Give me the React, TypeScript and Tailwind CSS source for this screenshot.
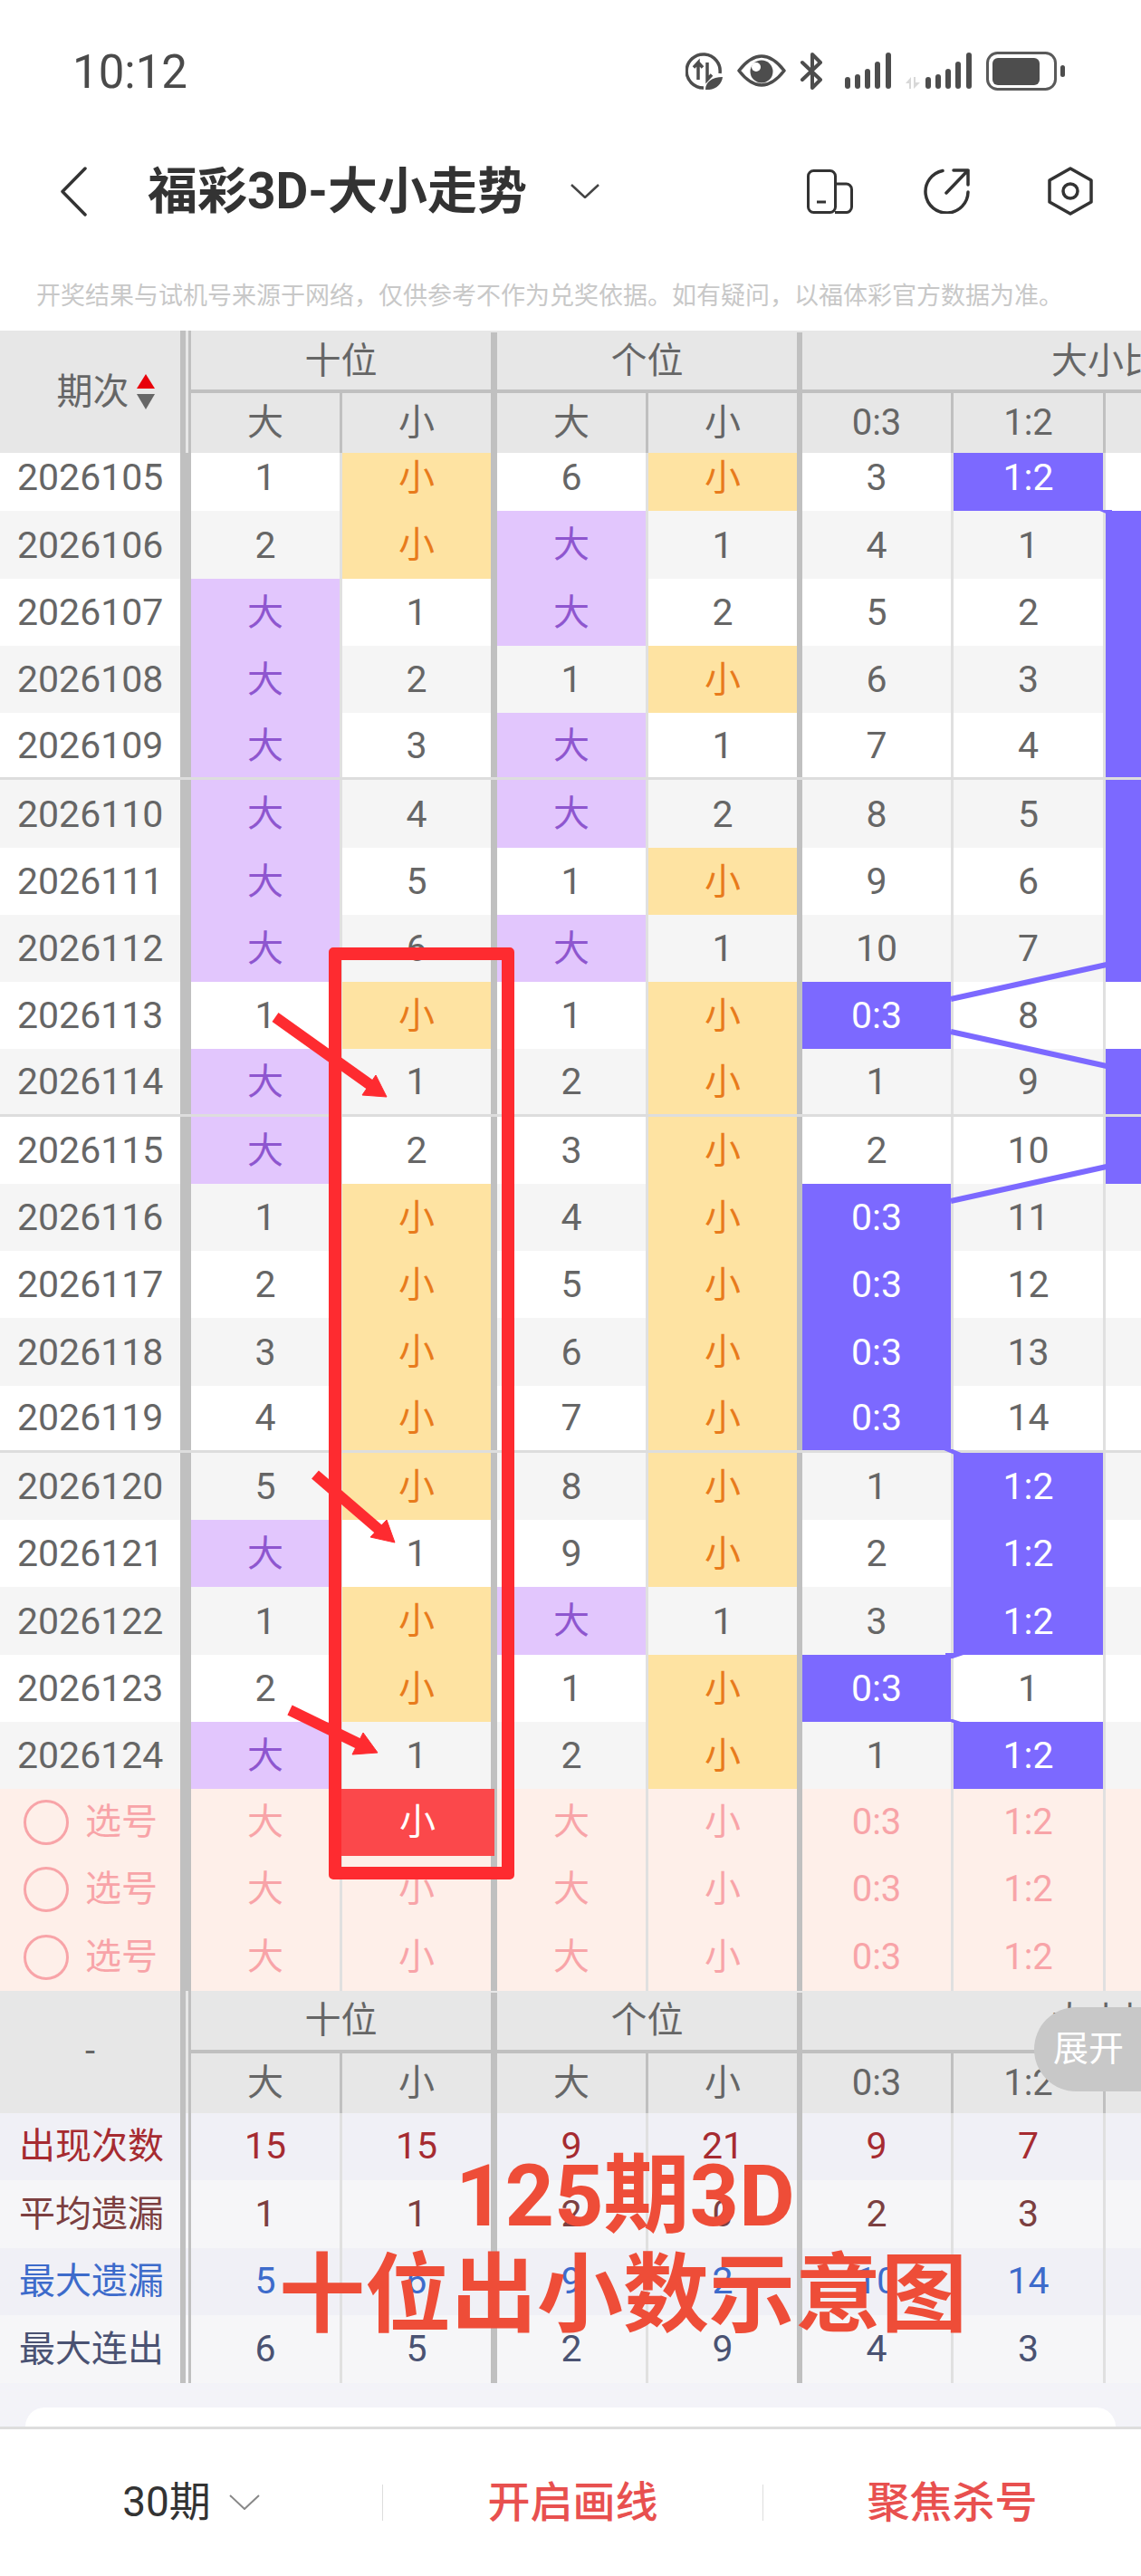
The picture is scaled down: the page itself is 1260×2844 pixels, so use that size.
import React from "react";

const COLS = [
  "w-[167px] border-r-[3px]",
  "w-[171px] border-r-[7px]",
  "w-[167px] border-r-[3px]",
  "w-[170px] border-r-[6px]",
  "w-[167px] border-r-[3px]",
  "w-[168px] border-r-[3px]",
  "w-[167px] border-r-[3px]",
];
// borders between columns: thin ones are lighter in the body, thick ones are always #c0c0c0
const BODY_BORDER = [
  "border-[#e0e0e0]",
  "border-[#c0c0c0]",
  "border-[#e0e0e0]",
  "border-[#c0c0c0]",
  "border-[#e0e0e0]",
  "border-[#e0e0e0]",
  "border-[#e0e0e0]",
];

// period, 十位大, 十位小, 个位大, 个位小, 0:3, 1:2, is 2:1 column filled
const ROWS: [string, string, string, string, string, string, string, boolean][] = [
  ["2026105", "1", "小", "6", "小", "3", "1:2", false],
  ["2026106", "2", "小", "大", "1", "4", "1", true],
  ["2026107", "大", "1", "大", "2", "5", "2", true],
  ["2026108", "大", "2", "1", "小", "6", "3", true],
  ["2026109", "大", "3", "大", "1", "7", "4", true],
  ["2026110", "大", "4", "大", "2", "8", "5", true],
  ["2026111", "大", "5", "1", "小", "9", "6", true],
  ["2026112", "大", "6", "大", "1", "10", "7", true],
  ["2026113", "1", "小", "1", "小", "0:3", "8", false],
  ["2026114", "大", "1", "2", "小", "1", "9", true],
  ["2026115", "大", "2", "3", "小", "2", "10", true],
  ["2026116", "1", "小", "4", "小", "0:3", "11", false],
  ["2026117", "2", "小", "5", "小", "0:3", "12", false],
  ["2026118", "3", "小", "6", "小", "0:3", "13", false],
  ["2026119", "4", "小", "7", "小", "0:3", "14", false],
  ["2026120", "5", "小", "8", "小", "1", "1:2", false],
  ["2026121", "大", "1", "9", "小", "2", "1:2", false],
  ["2026122", "1", "小", "大", "1", "3", "1:2", false],
  ["2026123", "2", "小", "1", "小", "0:3", "1", false],
  ["2026124", "大", "1", "2", "小", "1", "1:2", false],
];

const STATS = [
  { label: "出现次数", values: ["15", "15", "9", "21", "9", "7"], text: "text-[#a62b31]", bg: "bg-[#f0f0f6]" },
  { label: "平均遗漏", values: ["1", "1", "2", "0", "2", "3"], text: "text-[#7c3f40]", bg: "bg-[#f6f6f8]" },
  { label: "最大遗漏", values: ["5", "6", "9", "2", "10", "14"], text: "text-[#3d6bcb]", bg: "bg-[#f0f0f6]" },
  { label: "最大连出", values: ["6", "5", "2", "9", "4", "3"], text: "text-[#4a5272]", bg: "bg-[#f6f6f8]" },
];

function cellTone(value: string, col: number) {
  if (value === "大") return "bg-[#e2c6fd] text-[#8e56cf]";
  if (value === "小") return "bg-[#fee3a2] text-[#e87b1c]";
  if (col >= 4 && value.includes(":")) return "bg-[#7c69ff] text-white";
  return "text-[#666666]";
}

function LeftDivider() {
  return <div className="w-[12px] shrink-0 border-l-[6px] border-r-[3px] border-[#c0c0c0]" />;
}

function TableHeader({ left }: { left: React.ReactNode }) {
  return (
    <div className="relative z-10 flex h-[135px] bg-[#e7e7e7] text-[40px] text-[#666666]">
      <div className="flex w-[199px] shrink-0 items-center justify-center">{left}</div>
      <LeftDivider />
      <div className="flex flex-col">
        <div className="flex h-[65px] pt-[2px]">
          <div className="flex w-[338px] items-center justify-center border-r-[7px] border-[#c0c0c0]">十位</div>
          <div className="flex w-[337px] items-center justify-center border-r-[6px] border-[#c0c0c0]">个位</div>
          <div className="flex w-[670px] items-center justify-center">大小比</div>
        </div>
        <div className="h-[4px] w-[1049px] bg-[#c0c0c0]" />
        <div className="flex h-[66px]">
          {["大", "小", "大", "小", "0:3", "1:2", "2:1"].map((t, i) => (
            <div key={i} className={`flex shrink-0 items-center justify-center border-[#c0c0c0] ${COLS[i]}`}>
              {i === 6 ? "" : t}
            </div>
          ))}
        </div>
      </div>
    </div>
  );
}

function DataRow({ row, index }: { row: (typeof ROWS)[number]; index: number }) {
  const cells = row.slice(1, 7) as string[];
  const striped = index % 2 === 1;
  const divided = index === 4 || index === 9 || index === 14;
  return (
    <div className={`flex h-[74.26px] text-[41px] ${striped ? "bg-[#f5f5f5]" : "bg-white"} ${divided ? "border-b-[3px] border-[#dddddd]" : ""}`}>
      <div className="flex w-[199px] shrink-0 items-center pl-[19px] pt-[2px] text-[#666666]">{row[0]}</div>
      <div className="w-[12px] shrink-0 bg-[#c0c0c0]" />
      {cells.map((value, i) => (
        <div key={i} className={`flex shrink-0 items-center justify-center ${COLS[i]} ${BODY_BORDER[i]}`}>
          <div className={`flex h-full w-full items-center justify-center pt-[2px] ${cellTone(value, i)} ${value === "大" || value === "小" ? "text-[40px]" : ""}`}>
            {value}
          </div>
        </div>
      ))}
      <div className={`shrink-0 ${COLS[6]} ${BODY_BORDER[6]} ${row[7] ? "bg-[#7c69ff]" : ""}`} />
    </div>
  );
}

function SelectRow({ first }: { first: boolean }) {
  return (
    <div className="flex h-[74.3px] bg-[#feefe9] text-[40px] text-[#f8a4a8]">
      <div className="flex w-[199px] shrink-0 items-center">
        <div className="ml-[26px] h-[50px] w-[50px] rounded-full border-[3px] border-[#f8a4a8]" />
        <span className="ml-[18px]">选号</span>
      </div>
      <div className="w-[12px] shrink-0 bg-[#c0c0c0]" />
      {["大", "小", "大", "小", "0:3", "1:2", "2:1"].map((t, i) => (
        <div key={i} className={`relative flex shrink-0 items-center justify-center ${COLS[i]} ${BODY_BORDER[i]}`}>
          {i === 6 ? "" : t}
          {first && i === 1 && (
            <div className="absolute -left-[2px] -right-[4px] top-0 flex h-[74px] items-center justify-center bg-[#fb484b] text-white">
              小
            </div>
          )}
        </div>
      ))}
    </div>
  );
}

function StatRow({ stat }: { stat: (typeof STATS)[number] }) {
  return (
    <div className={`flex h-[74.5px] text-[40px] ${stat.bg} ${stat.text}`}>
      <div className="flex w-[199px] shrink-0 items-center pl-[21px]">{stat.label}</div>
      <LeftDivider />
      {stat.values.map((v, i) => (
        <div key={i} className={`flex shrink-0 items-center justify-center text-[41px] ${COLS[i]} ${BODY_BORDER[i]}`}>
          {v}
        </div>
      ))}
      <div className={`shrink-0 ${COLS[6]} ${BODY_BORDER[6]}`} />
    </div>
  );
}

function StatusIcons() {
  return (
    <div className="flex items-center">
      <svg width="41" height="41" viewBox="0 0 41 41" fill="none" stroke="#4d4d4d" strokeWidth="3.5">
        <path d="M38 23 A18.5 18.5 0 1 0 20 39" />
        <path d="M14 30 V11 L9 16.5 M14 11 L19 16.5 M24 11 V30 L29 24.5" strokeWidth="3.5" />
        <path d="M22 41 C22 33 29 27 41 27 C40 36 32 42 22 41Z" fill="#4d4d4d" stroke="none" />
      </svg>
      <svg className="ml-[16px]" width="54" height="36" viewBox="0 0 54 36" fill="none">
        <path d="M2 18 Q27 -14 52 18 Q27 50 2 18Z" stroke="#4d4d4d" strokeWidth="3.5" strokeLinejoin="round" />
        <circle cx="27" cy="19" r="12.5" fill="#4d4d4d" />
        <circle cx="21" cy="14" r="5" fill="#fff" />
      </svg>
      <svg className="ml-[15px]" width="26" height="41" viewBox="0 0 26 41" fill="none" stroke="#4d4d4d" strokeWidth="4" strokeLinecap="round" strokeLinejoin="round">
        <path d="M3 11 L23 30 L14 39 V24 M14 17 V2 L23 11 L3 30" />
      </svg>
      <svg className="ml-[24px]" width="51" height="40" viewBox="0 0 51 40" fill="#4d4d4d">
        <rect x="0" y="27" width="6" height="13" rx="3" />
        <rect x="11" y="24" width="6" height="16" rx="3" />
        <rect x="22" y="18" width="6" height="22" rx="3" />
        <rect x="33" y="10" width="6" height="30" rx="3" />
        <rect x="45" y="0" width="6" height="40" rx="3" />
      </svg>
      <svg className="ml-[16px]" width="73" height="40" viewBox="0 0 73 40">
        <path d="M0 34 L6 27 V40 H4 V34Z M9 27 H11 V33 H16 L9 40Z" fill="#d8d8d8" />
        <g fill="#4d4d4d">
          <rect x="22" y="27" width="6" height="13" rx="3" />
          <rect x="33" y="24" width="6" height="16" rx="3" />
          <rect x="44" y="18" width="6" height="22" rx="3" />
          <rect x="55" y="10" width="6" height="30" rx="3" />
          <rect x="67" y="0" width="6" height="40" rx="3" />
        </g>
      </svg>
      <svg className="ml-[16px]" width="87" height="43" viewBox="0 0 87 43" fill="none">
        <rect x="1.5" y="1.5" width="75" height="40" rx="11" stroke="#5a5a5a" strokeWidth="3" />
        <rect x="7" y="7" width="52" height="30" rx="6" fill="#4d4d4d" />
        <rect x="82" y="15" width="5" height="13" rx="2.5" fill="#4d4d4d" />
      </svg>
    </div>
  );
}

function NavIcons() {
  return (
    <>
      <svg className="ml-auto" width="51" height="49" viewBox="0 0 51 49" fill="none" stroke="#333333" strokeWidth="3">
        <rect x="1.5" y="1.5" width="30" height="46" rx="6" />
        <path d="M31 16 H43 A6 6 0 0 1 49.5 22 V41.5 A6 6 0 0 1 43 47.5 H31" />
        <path d="M11 36 H21" />
      </svg>
      <svg className="ml-[78px]" width="51" height="50" viewBox="0 0 51 50" fill="none" stroke="#333333" strokeWidth="3.5" strokeLinecap="round" strokeLinejoin="round">
        <path d="M21 2.5 A23.5 23.5 0 1 0 49 26" />
        <path d="M25 27 L49 2 M33 2 H49 V18" />
      </svg>
      <svg className="ml-[86px]" width="50" height="54" viewBox="0 0 50 54" fill="none" stroke="#333333" strokeWidth="3.5" strokeLinejoin="round">
        <path d="M25 2 L48 15 V39 L25 52 L2 39 V15Z" />
        <circle cx="25" cy="27" r="8" />
      </svg>
    </>
  );
}

function Overlays() {
  return (
    <>
      {/* connector lines of the ratio chart */}
      <svg className="pointer-events-none absolute left-0 top-0" width="1260" height="2844" fill="none">
        <g stroke="#7c69ff" strokeWidth="6">
          <path d="M1050 1103 L1222 1065" />
          <path d="M1050 1139 L1222 1177" />
          <path d="M1050 1326 L1222 1288" />
        </g>
        <g fill="#7c69ff">
          <path d="M1212 563 H1228 V568 H1224 Z" />
          <path d="M1040 1600 H1052 L1066 1606 H1054 Z" />
          <path d="M1044 1825 H1064 V1827 L1052 1831 H1044 Z" />
          <path d="M1044 1898 H1052 L1064 1902 H1052 Z" />
        </g>
        {/* hand-drawn annotation arrows */}
        <g fill="#fe2b30" stroke="#fe2b30">
          <path d="M304 1123 L412 1200" strokeWidth="12" />
          <path d="M415 1187 L400 1209 L427 1211Z" strokeWidth="1" />
          <path d="M348 1628 L420 1690" strokeWidth="12" />
          <path d="M427 1678 L409 1697 L436 1703Z" strokeWidth="1" />
          <path d="M320 1888 L402 1928" strokeWidth="12" />
          <path d="M401 1913 L389 1937 L417 1935Z" strokeWidth="1" />
        </g>
      </svg>
      <div className="pointer-events-none absolute left-[363px] top-[1046px] h-[1029px] w-[205px] rounded-[5px] border-[14px] border-[#fe2b30]" />
      <div className="absolute right-0 top-[2216px] z-20 flex h-[93px] w-[118px] items-center rounded-l-full bg-[#c8c8c8] pl-[21px] text-[39px] text-white">
        展开
      </div>
      <div className="pointer-events-none absolute left-[503px] top-[2370px] z-20 text-[95px] font-bold leading-[110px] whitespace-nowrap text-[#ee4d38]">
        125期3D
      </div>
      <div className="pointer-events-none absolute left-[308px] top-[2480px] z-20 text-[95px] font-bold leading-[110px] whitespace-nowrap text-[#ee4d38]">
        十位出小数示意图
      </div>
    </>
  );
}

export default function App() {
  return (
    <div className="relative h-[2844px] w-[1260px] overflow-hidden bg-white [font-family:Roboto,'Noto_Sans_CJK_SC',sans-serif]">
      <div className="flex h-[156px] items-center justify-between pl-[80px] pr-[84px]">
        <span className="pt-[2px] text-[51px] leading-none text-[#4a4a4a]">10:12</span>
        <StatusIcons />
      </div>

      <div className="flex h-[124px] items-center pb-[14px] pl-[66px] pr-[53px]">
        <svg width="30" height="55" viewBox="0 0 30 55" fill="none" stroke="#333333" strokeWidth="3.5" strokeLinecap="round" strokeLinejoin="round">
          <path d="M28 2 L3 27.5 L28 53" />
        </svg>
        <span className="ml-[67px] text-[55px] font-bold leading-none text-[#333333]">福彩3D-大小走势</span>
        <svg className="ml-[48px]" width="32" height="16" viewBox="0 0 32 16" fill="none" stroke="#444444" strokeWidth="2.5">
          <path d="M1 1 L16 15 L31 1" />
        </svg>
        <NavIcons />
      </div>

      <div className="flex h-[85px] items-center pt-[9px] pl-[40px] text-[27px] whitespace-nowrap text-[#c8c8c8]">
        开奖结果与试机号来源于网络，仅供参考不作为兑奖依据。如有疑问，以福体彩官方数据为准。
      </div>

      <TableHeader
        left={
          <div className="flex items-center gap-[8px] pl-[34px]">
            <span>期次</span>
            <svg width="20" height="39" viewBox="0 0 20 39">
              <path d="M10 0 L20 16 H0Z" fill="#e8000a" />
              <path d="M0 22 H20 L10 39Z" fill="#666666" />
            </svg>
          </div>
        }
      />

      <div className="-mt-[10px]">
        {ROWS.map((row, i) => (
          <DataRow key={row[0]} row={row} index={i} />
        ))}
        <SelectRow first />
        <SelectRow first={false} />
        <SelectRow first={false} />
      </div>

      <TableHeader left={<span>-</span>} />

      {STATS.map((s) => (
        <StatRow key={s.label} stat={s} />
      ))}

      <div className="h-[48px] bg-[#f3f3f8] px-[28px] pt-[27px]">
        <div className="h-[21px] rounded-t-[30px] bg-white" />
      </div>

      <div className="grid h-[165px] grid-cols-[422px_420px_418px] items-center border-t-[3px] border-[#dddddd] bg-white text-[47px] font-medium">
        <div className="flex items-center justify-center gap-[20px] font-normal text-[#333333]">
          <span className="text-[46px]">30期</span>
          <svg width="34" height="17" viewBox="0 0 34 17" fill="none" stroke="#888888" strokeWidth="2">
            <path d="M1 1 L17 16 L33 1" />
          </svg>
        </div>
        <div className="flex h-[40px] items-center justify-center border-l border-[#dddddd] text-[#e8504f]">开启画线</div>
        <div className="flex h-[40px] items-center justify-center border-l border-[#dddddd] text-[#e8504f]">聚焦杀号</div>
      </div>

      <Overlays />
    </div>
  );
}
